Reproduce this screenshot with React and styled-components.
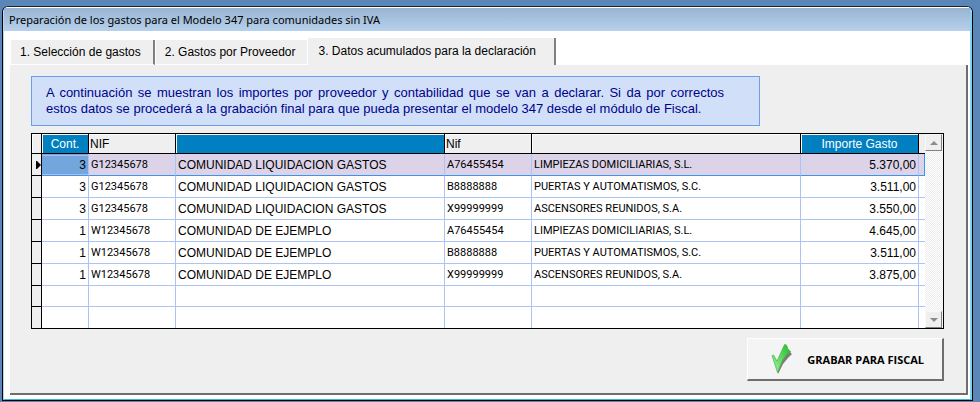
import React, { useState } from 'react';
import styled, { createGlobalStyle } from 'styled-components';

const GlobalStyle = createGlobalStyle`
  * {
    box-sizing: border-box;
  }

  body {
    margin: 0;
    background: #5b87b8;
    font-family: 'Liberation Sans', Arial, sans-serif;
    color: #000;
  }
`;

const Desktop = styled.div`
  min-height: 100vh;
  padding: 6px 7px 1px 2px;
`;

const Window = styled.main`
  border: 1px solid #000;
  border-top-color: #222;
  border-radius: 6px 6px 0 0;
  background: #fff;
  overflow: hidden;
`;

const Frame = styled.div`
  border: solid #fff;
  border-width: 1px 2px 1px 1px;
  border-right-color: #7fd4ee;
  border-bottom-color: #3cb4d4;
  border-left-color: #b9d3f0;
  border-radius: 5px 5px 0 0;
`;

const TitleBar = styled.h1`
  margin: 0;
  height: 23px;
  padding: 0 5px;
  background: linear-gradient(#98b4d2, #b7d1ec);
  font: 11px/24px 'Noto Sans', sans-serif;
  white-space: nowrap;
`;

const Body = styled.div`
  padding: 7px 2px 4px 6px;
`;

const TabList = styled.div`
  display: flex;
  align-items: flex-end;
  height: 27px;
`;

const Tab = styled.button`
  height: ${({ $active }) => ($active ? 27 : 25)}px;
  padding: ${({ $active }) => ($active ? '0 18px 2px 10px' : '0 12px 0 9px')};
  border: 0 solid #808080;
  border-right-width: ${({ $divider }) => ($divider ? 2 : 0)}px;
  border-bottom: ${({ $active }) => ($active ? 0 : 1)}px solid #fff;
  border-left: 1px solid #fff;
  background: #efefef;
  font: 12px 'Liberation Sans', Arial, sans-serif;
  color: #000;
  white-space: nowrap;
`;

const Page = styled.section`
  padding: 11px 22px 12px 21px;
  border: solid #6e6e6e;
  border-width: 0 2px 2px 0;
  background: #efefef;
`;

const Notice = styled.p`
  width: 729px;
  max-width: 100%;
  margin: 0 0 7px;
  padding: 8px 35px 8px 14px;
  border: 1px solid #6d9eeb;
  background: #d1e0f8;
  color: #00008b;
  font-size: 13px;
  line-height: 16px;
  text-align: justify;
`;

const Grid = styled.div`
  display: flex;
  border: 1px solid #000;
  background: #fff;
`;

const Table = styled.table`
  flex: 1;
  min-width: 0;
  table-layout: fixed;
  border-collapse: separate;
  border-spacing: 0;
  font-size: 12px;
`;

const Col = styled.col`
  width: ${({ $width }) => ($width ? `${$width}px` : 'auto')};
`;

const HeadCell = styled.th`
  height: 20px;
  padding: 0 1px;
  border: solid #000;
  border-width: 0 1px 1px 0;
  background: ${({ $blue }) => ($blue ? '#0080c0' : '#efefef')};
  box-shadow: inset 1px 1px #fff;
  color: ${({ $blue }) => ($blue ? '#fff' : '#000')};
  font-weight: normal;
  text-align: ${({ $blue }) => ($blue ? 'center' : 'left')};
`;

const Filler = styled(HeadCell)`
  border-right-width: 0;
  box-shadow: none;
`;

const Row = styled.tr`
  height: ${({ $empty }) => ($empty ? 21 : 22)}px;
  background: ${({ $selected }) => ($selected ? '#dcd3e8' : '#fff')};

  &:last-child > * {
    border-bottom-width: 0;
  }
`;

const Marker = styled.th`
  padding: 0;
  border: solid #000;
  border-width: 0 1px 1px 0;
  background: #efefef;
  line-height: 0;
  text-align: right;
`;

const Cell = styled.td`
  padding: 0 2px;
  border-right: 1px solid #a9c4f5;
  border-bottom: 1px solid ${({ $selected }) => ($selected ? '#3d94f0' : '#a9c4f5')};
  background: ${({ $current }) => ($current ? '#73a6dc' : 'transparent')};
  box-shadow: ${({ $current }) =>
    $current ? 'inset 0 1px #73a6dc, inset 0 2px #b4bce4, inset 0 -1px #b4bce4' : 'none'};
  font-family: ${({ $small }) => ($small ? "Roboto, 'Liberation Sans', sans-serif" : 'inherit')};
  font-size: ${({ $small }) => ($small ? 11 : 12)}px;
  text-align: ${({ $right }) => ($right ? 'right' : 'left')};
  white-space: nowrap;
`;

const EndCell = styled(Cell)`
  border-right: ${({ $selected }) => ($selected ? '1px solid #3d94f0' : '0')};
`;

const ScrollBar = styled.div`
  display: flex;
  flex-direction: column;
  justify-content: space-between;
  width: 18px;
  background: repeating-conic-gradient(#fff 0 25%, #ececec 0 50%) 0 0 / 2px 2px;
`;

const ScrollButton = styled.button`
  display: flex;
  align-items: center;
  justify-content: center;
  width: 17px;
  height: 17px;
  padding: 0;
  border: 1px solid;
  border-color: #f8f8f8 #808080 #808080 #f8f8f8;
  background: #efefef;
`;

const Actions = styled.div`
  display: flex;
  justify-content: flex-end;
  margin-top: 9px;
`;

const SaveButton = styled.button`
  display: flex;
  align-items: center;
  gap: 14px;
  height: 43px;
  padding: 0 18px 0 23px;
  border: solid;
  border-width: 1px 2px 2px 1px;
  border-color: #fff #6e6e6e #6e6e6e #fff;
  background: #f4f4f4;
  font: bold 11px 'Open Sans', sans-serif;
  color: #000;
  white-space: nowrap;
`;

const tabs = ['1. Selección de gastos', '2. Gastos por Proveedor', '3. Datos acumulados para la declaración'];

const LIQUIDACION = 'COMUNIDAD LIQUIDACION GASTOS';
const EJEMPLO = 'COMUNIDAD DE EJEMPLO';

const rows = [
  ['3', 'G12345678', LIQUIDACION, 'A76455454', 'LIMPIEZAS DOMICILIARIAS, S.L.', '5.370,00'],
  ['3', 'G12345678', LIQUIDACION, 'B8888888', 'PUERTAS Y AUTOMATISMOS, S.C.', '3.511,00'],
  ['3', 'G12345678', LIQUIDACION, 'X99999999', 'ASCENSORES REUNIDOS, S.A.', '3.550,00'],
  ['1', 'W12345678', EJEMPLO, 'A76455454', 'LIMPIEZAS DOMICILIARIAS, S.L.', '4.645,00'],
  ['1', 'W12345678', EJEMPLO, 'B8888888', 'PUERTAS Y AUTOMATISMOS, S.C.', '3.511,00'],
  ['1', 'W12345678', EJEMPLO, 'X99999999', 'ASCENSORES REUNIDOS, S.A.', '3.875,00'],
  ['', '', '', '', '', ''],
  ['', '', '', '', '', ''],
];

const Arrow = ({ down }) => (
  <svg width="8" height="4" viewBox="0 0 8 4" aria-hidden="true">
    <path d={down ? 'M0 0h8L4 4z' : 'M0 4h8L4 0z'} fill="#8c8c8c" />
  </svg>
);

const Pointer = () => (
  <svg width="5" height="8" viewBox="0 0 5 8" aria-hidden="true">
    <path d="M0 0h1l4 4-4 4H0z" fill="#000" />
  </svg>
);

const Check = () => (
  <svg width="22" height="32" viewBox="0 0 22 32" aria-hidden="true">
    <defs>
      <linearGradient id="check" x1="0" y1="1" x2="1" y2="0">
        <stop offset="0" stopColor="#a4eda4" />
        <stop offset="0.5" stopColor="#62d862" />
        <stop offset="1" stopColor="#1fb82a" />
      </linearGradient>
    </defs>
    <path d="M3 15l4 4 8-13 6 5-4 4-5 6-5 10z" fill="#7d7d7d" />
    <path
      d="M1 12.5l1.5-.5 3.5 6L13.5 1.5l2 .5 1.500 4 3 3-3.500 1.500-4.500 6L6.500 29.500z"
      fill="url(#check)"
      stroke="#36b23c"
      strokeWidth="0.6"
    />
  </svg>
);

const App = () => {
  const [active, setActive] = useState(2);
  const [selected, setSelected] = useState(0);

  return (
    <Desktop>
      <GlobalStyle />
      <Window>
        <Frame>
          <TitleBar>Preparación de los gastos para el Modelo 347 para comunidades sin IVA</TitleBar>
          <Body>
            <TabList role="tablist">
              {tabs.map((label, i) => (
                <Tab
                  key={label}
                  role="tab"
                  aria-selected={i === active}
                  $active={i === active}
                  $divider={i !== active - 1}
                  onClick={() => setActive(i)}
                >
                  {label}
                </Tab>
              ))}
            </TabList>
            <Page role="tabpanel">
              <Notice>
                A continuación se muestran los importes por proveedor y contabilidad que se van a declarar. Si da por
                correctos estos datos se procederá a la grabación final para que pueda presentar el modelo 347 desde el
                módulo de Fiscal.
              </Notice>
              <Grid>
                <Table>
                  <colgroup>
                    <Col $width={10} />
                    <Col $width={47} />
                    <Col $width={87} />
                    <Col />
                    <Col $width={87} />
                    <Col $width={269} />
                    <Col $width={118} />
                    <Col $width={6} />
                  </colgroup>
                  <thead>
                    <tr>
                      <HeadCell />
                      <HeadCell $blue>Cont.</HeadCell>
                      <HeadCell>NIF</HeadCell>
                      <HeadCell $blue />
                      <HeadCell>Nif</HeadCell>
                      <HeadCell />
                      <HeadCell $blue>Importe Gasto</HeadCell>
                      <Filler />
                    </tr>
                  </thead>
                  <tbody>
                    {rows.map(([cont, nif, community, supplierNif, supplier, amount], i) => {
                      const on = i === selected;
                      return (
                        <Row key={i} $empty={!cont} $selected={on} onClick={() => setSelected(i)}>
                          <Marker>{on && <Pointer />}</Marker>
                          <Cell $right $current={on} $selected={on}>{cont}</Cell>
                          <Cell $small $selected={on}>{nif}</Cell>
                          <Cell $selected={on}>{community}</Cell>
                          <Cell $small $selected={on}>{supplierNif}</Cell>
                          <Cell $small $selected={on}>{supplier}</Cell>
                          <Cell $right $selected={on}>{amount}</Cell>
                          <EndCell $selected={on} />
                        </Row>
                      );
                    })}
                  </tbody>
                </Table>
                <ScrollBar>
                  <ScrollButton aria-label="Subir">
                    <Arrow />
                  </ScrollButton>
                  <ScrollButton aria-label="Bajar">
                    <Arrow down />
                  </ScrollButton>
                </ScrollBar>
              </Grid>
              <Actions>
                <SaveButton>
                  <Check />
                  GRABAR PARA FISCAL
                </SaveButton>
              </Actions>
            </Page>
          </Body>
        </Frame>
      </Window>
    </Desktop>
  );
};

export default App;
